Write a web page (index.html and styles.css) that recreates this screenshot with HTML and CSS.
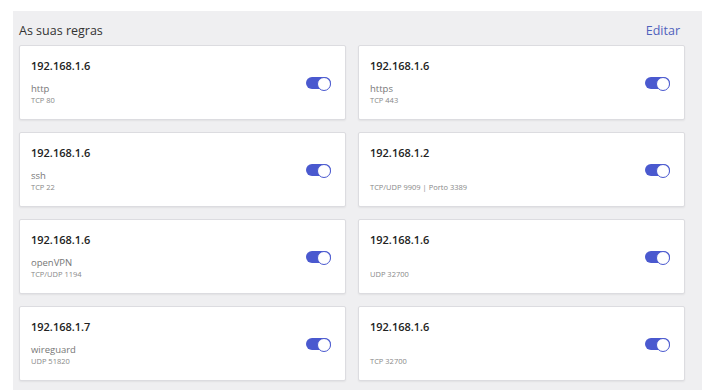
FILE: index.html
```html
<!DOCTYPE html>
<html lang="pt">
<head>
  <meta charset="UTF-8">
  <meta name="viewport" content="width=device-width, initial-scale=1.0">
  <title>As suas regras</title>
  <link rel="stylesheet" href="styles.css">
</head>
<body>
  <div class="panel">
    <div class="panel-head">
      <h2>As suas regras</h2>
      <a class="edit" href="#">Editar</a>
    </div>
    <div class="rules">
      <div class="rule">
        <div class="info">
          <div class="ip">192.168.1.6</div>
          <div class="name">http</div>
          <div class="proto">TCP 80</div>
        </div>
        <span class="toggle"></span>
      </div>
      <div class="rule">
        <div class="info">
          <div class="ip">192.168.1.6</div>
          <div class="name">https</div>
          <div class="proto">TCP 443</div>
        </div>
        <span class="toggle"></span>
      </div>
      <div class="rule">
        <div class="info">
          <div class="ip">192.168.1.6</div>
          <div class="name">ssh</div>
          <div class="proto">TCP 22</div>
        </div>
        <span class="toggle"></span>
      </div>
      <div class="rule">
        <div class="info">
          <div class="ip">192.168.1.2</div>
          <div class="name"></div>
          <div class="proto">TCP/UDP 9909 | Porto 3389</div>
        </div>
        <span class="toggle"></span>
      </div>
      <div class="rule">
        <div class="info">
          <div class="ip">192.168.1.6</div>
          <div class="name">openVPN</div>
          <div class="proto">TCP/UDP 1194</div>
        </div>
        <span class="toggle"></span>
      </div>
      <div class="rule">
        <div class="info">
          <div class="ip">192.168.1.6</div>
          <div class="name"></div>
          <div class="proto">UDP 32700</div>
        </div>
        <span class="toggle"></span>
      </div>
      <div class="rule">
        <div class="info">
          <div class="ip">192.168.1.7</div>
          <div class="name">wireguard</div>
          <div class="proto">UDP 51820</div>
        </div>
        <span class="toggle"></span>
      </div>
      <div class="rule">
        <div class="info">
          <div class="ip">192.168.1.6</div>
          <div class="name"></div>
          <div class="proto">TCP 32700</div>
        </div>
        <span class="toggle"></span>
      </div>
    </div>
  </div>
</body>
</html>
```

FILE: styles.css
```css
* {
  margin: 0;
  padding: 0;
  box-sizing: border-box;
  font-family: 'Open Sans', sans-serif;
}

body {
  background: #fff;
  padding: 11px 4px 0 13px;
}

.panel {
  background: #efeff1;
  padding: 11px 17px 12px 6px;
}

.panel-head {
  display: flex;
  justify-content: space-between;
  align-items: center;
  height: 16px;
  margin-bottom: 7px;
}

.panel-head h2 {
  font-size: 12.5px;
  font-weight: 400;
  color: #333;
}

.edit {
  font-size: 12.5px;
  color: #5062bd;
  text-decoration: none;
  padding-right: 5px;
}

.rules {
  display: grid;
  grid-template-columns: 1fr 1fr;
  gap: 12px;
}

.rule {
  height: 75px;
  background: #fff;
  border: 1px solid #dcdce0;
  border-radius: 2px;
  box-shadow: 0 1px 2px rgba(0, 0, 0, 0.06);
  display: flex;
  align-items: center;
  justify-content: space-between;
  padding: 0 14px 0 11px;
}

.info {
  display: flex;
  flex-direction: column;
}

.ip {
  font-size: 11px;
  font-weight: 600;
  color: #222;
  line-height: 14px;
  margin-bottom: 9px;
}

.name {
  font-size: 9.5px;
  color: #777;
  line-height: 13px;
  min-height: 13px;
}

.proto {
  font-size: 7.5px;
  color: #888;
  line-height: 11px;
}

.toggle {
  position: relative;
  width: 25px;
  height: 12px;
  border-radius: 6px;
  background: #4a59cf;
}

.toggle::after {
  content: "";
  position: absolute;
  right: 0;
  top: 0;
  width: 12px;
  height: 12px;
  border-radius: 50%;
  background: #fff;
  border: 1px solid #4a59cf;
}
```
